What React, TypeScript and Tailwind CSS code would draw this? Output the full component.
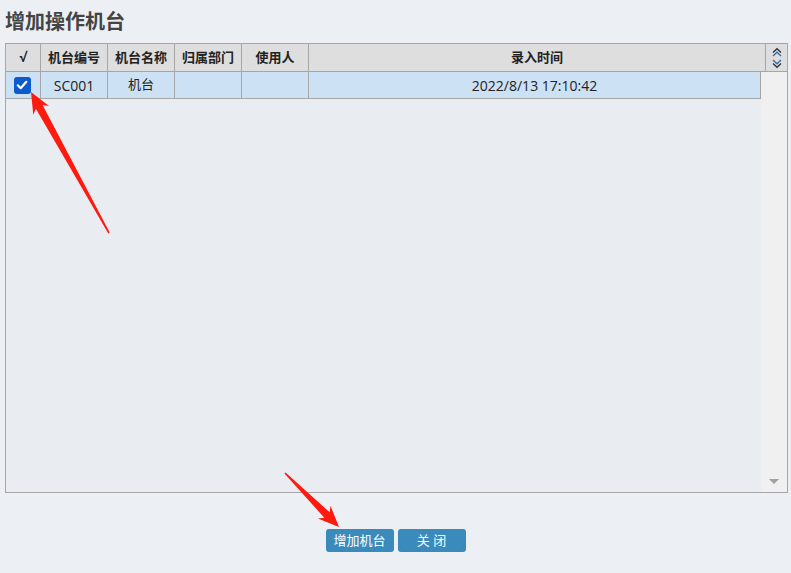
const font = "font-['Open_Sans','Noto_Sans_CJK_SC',sans-serif]";

function Arrow({ x1, y1, x2, y2 }: { x1: number; y1: number; x2: number; y2: number }) {
  const dx = x2 - x1;
  const dy = y2 - y1;
  const L = Math.sqrt(dx * dx + dy * dy);
  const angle = (Math.atan2(dy, dx) * 180) / Math.PI;
  const pts = `0,-0.8 ${L - 17},-3.8 ${L - 21},-9 ${L},0 ${L - 21},9 ${L - 17},3.8 0,0.8`;
  return (
    <g transform={`translate(${x1} ${y1}) rotate(${angle})`}>
      <polygon points={pts} fill="#ff1a0f" />
    </g>
  );
}

function SortIcon() {
  return (
    <svg width="12" height="22" viewBox="0 0 12 22" fill="none" strokeWidth="1.4">
      <path d="M2 5.5 L6 1.8 L10 5.5" stroke="#2a3440" />
      <path d="M2 9 L6 5.3 L10 9" stroke="#3a6f9c" />
      <path d="M2 13 L6 16.7 L10 13" stroke="#3a6f9c" />
      <path d="M2 16.5 L6 20.2 L10 16.5" stroke="#2a3440" />
    </svg>
  );
}

const headCols = [
  { label: "√", w: "w-[35px]" },
  { label: "机台编号", w: "w-[67px]" },
  { label: "机台名称", w: "w-[67px]" },
  { label: "归属部门", w: "w-[67px]" },
  { label: "使用人", w: "w-[67px]" },
  { label: "录入时间", w: "w-[457px]" },
];

export default function App() {
  return (
    <div className={`relative w-[791px] h-[573px] bg-[#eceff4] ${font} text-[#222] overflow-hidden`}>
      {/* Title */}
      <div className="h-[43px] pl-[5px] pt-[8px] text-[20px] font-bold text-[#444] leading-[28px]">
        增加操作机台
      </div>

      {/* Grid */}
      <div className="ml-[5px] w-[783px] h-[450px] border border-[#a6a6a6] flex flex-col bg-[#e9edf2]">
        {/* Header */}
        <div className="flex h-[28px] bg-[#dedede] border-b border-[#a6a6a6] text-[13px] font-bold">
          {headCols.map((c) => (
            <div
              key={c.label}
              className={`${c.w} shrink-0 border-r border-[#a6a6a6] flex items-center justify-center`}
            >
              {c.label}
            </div>
          ))}
          <div className="flex-1 flex items-center justify-center">
            <SortIcon />
          </div>
        </div>

        {/* Body */}
        <div className="flex flex-1">
          <div className="w-[755px] flex flex-col">
            <div className="flex h-[27px] bg-[#cce1f4] border-b border-r border-[#a6a6a6] text-[14px]">
              <div className="w-[35px] shrink-0 border-r border-[#a6a6a6] flex items-center justify-center">
                <div className="w-[17px] h-[17px] rounded-[3px] bg-[#0b5bcf] flex items-center justify-center -ml-[2px]">
                  <svg width="12" height="12" viewBox="0 0 12 12">
                    <path d="M1.8 6.3 L4.7 9.2 L10.3 2.8" stroke="#fff" strokeWidth="2.2" fill="none" strokeLinecap="round" strokeLinejoin="round" />
                  </svg>
                </div>
              </div>
              <div className="w-[67px] shrink-0 border-r border-[#a6a6a6] flex items-center justify-center">SC001</div>
              <div className="w-[67px] shrink-0 border-r border-[#a6a6a6] flex items-center justify-center text-[13px]">机台</div>
              <div className="w-[67px] shrink-0 border-r border-[#a6a6a6]" />
              <div className="w-[67px] shrink-0 border-r border-[#a6a6a6]" />
              <div className="flex-1 flex items-center justify-center">2022/8/13 17:10:42</div>
            </div>
          </div>
          <div className="flex-1 bg-[#f0f0f0] flex flex-col justify-end items-center pb-[8px]">
            <div className="w-0 h-0 border-l-[5px] border-r-[5px] border-t-[5px] border-l-transparent border-r-transparent border-t-[#a0a0a0]" />
          </div>
        </div>
      </div>

      {/* Buttons */}
      <div className="flex justify-center gap-[4px] mt-[36px]">
        <button className="w-[68px] h-[23px] rounded-[3px] bg-[#3b8abc] text-white text-[13px] leading-none">
          增加机台
        </button>
        <button className="w-[68px] h-[23px] rounded-[3px] bg-[#3b8abc] text-white text-[13px] leading-none">
          关 闭
        </button>
      </div>

      {/* Annotation arrows */}
      <svg className="absolute inset-0 pointer-events-none" width="791" height="573">
        <Arrow x1={109} y1={233} x2={31} y2={92} />
        <Arrow x1={285} y1={473} x2={339} y2={527} />
      </svg>
    </div>
  );
}
